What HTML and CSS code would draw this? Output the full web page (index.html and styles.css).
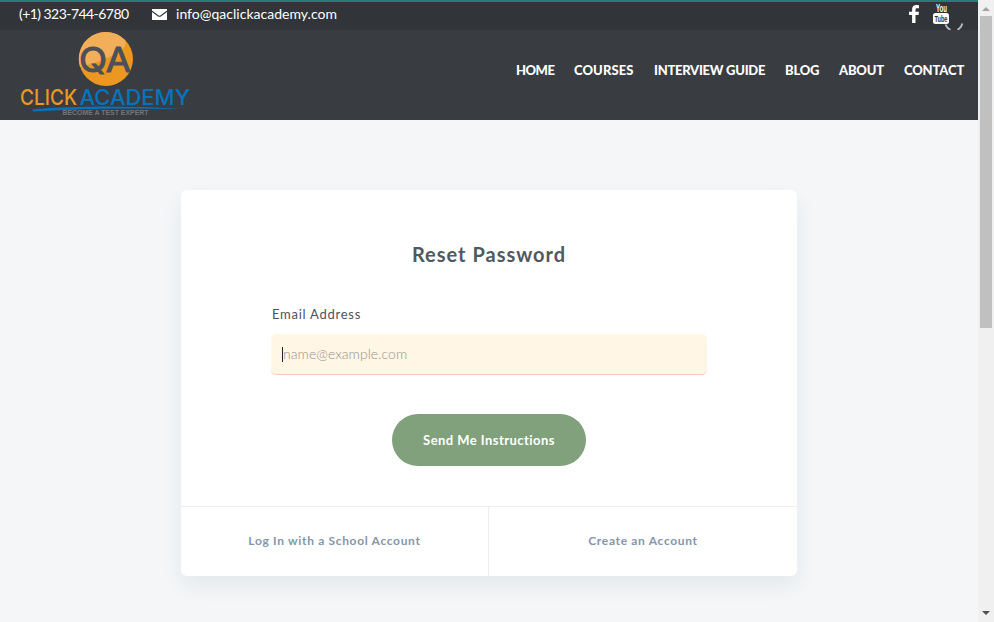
FILE: index.html
```html
<!DOCTYPE html>
<html lang="en">
<head>
<meta charset="utf-8">
<title>Reset Password</title>
<link rel="stylesheet" href="styles.css">
</head>
<body>
<div class="page">
  <div class="topbar">
    <span class="phone">(+1) 323-744-6780</span>
    <svg class="mail" width="15" height="11" viewBox="0 0 15 11"><rect width="15" height="11" fill="#fff"/><path d="M0 2.3 6 6.700q1.500 1 3 0l6-4.400" fill="none" stroke="#313439" stroke-width="1.100"/></svg>
    <span class="email">info@qaclickacademy.com</span>
    <div class="social">
      <svg width="10" height="18" viewBox="0 0 10 18"><path d="M10 .2v3H8.200c-1.400 0-1.700.7-1.700 1.600v2H10l-.5 3.300h-3V18H3.100v-7.900H0V6.800h3.100V4.300C3.100 1.500 4.800 0 7.400 0z" fill="#fff"/></svg>
      <svg class="youtube" width="32" height="28" viewBox="0 0 32 28"><text x="3" y="10" textLength="11" lengthAdjust="spacingAndGlyphs" class="you">You</text><rect y="11" width="16" height="11" rx="2.500" fill="#fff"/><text x="1.500" y="20" textLength="13" lengthAdjust="spacingAndGlyphs" class="tube">Tube</text><path d="M12.500 22.500a9 9 0 0 0 5 5.300M24.500 27.800q4-2 4.800-6.300" fill="none" stroke="#b5b6b9" stroke-width="2"/></svg>
    </div>
  </div>
  <header class="header">
    <svg class="logo" width="174" height="90" viewBox="0 0 174 90" role="img" aria-label="QA Click Academy">
      <circle cx="88" cy="29" r="27" fill="#ed9723"/>
      <path d="M62 37A27 27 0 0 1 107 10Q110 17 99 23 83 32 62 37Z" fill="#f2ae58"/>
      <text x="61" y="42" textLength="52" lengthAdjust="spacingAndGlyphs" class="logo-qa">QA</text>
      <text x="2" y="74.500" textLength="57" lengthAdjust="spacingAndGlyphs" class="logo-word click">CLICK</text>
      <text x="61.500" y="74.500" textLength="110.500" lengthAdjust="spacingAndGlyphs" class="logo-word academy">ACADEMY</text>
      <path d="M14 79.500Q80 74 162 79 85 77 15 81.500Z" fill="#0873bd"/>
      <text x="44.500" y="85" textLength="86" lengthAdjust="spacingAndGlyphs" class="logo-tag">BECOME A TEST EXPERT</text>
    </svg>
    <nav class="nav">
      <a class="n1">HOME</a><a class="n2">COURSES</a><a class="n3">INTERVIEW GUIDE</a><a class="n4">BLOG</a><a class="n5">ABOUT</a><a class="n6">CONTACT</a>
    </nav>
  </header>
  <main class="card">
    <form class="form">
      <h1>Reset Password</h1>
      <label>Email Address</label>
      <div class="field"><span class="caret"></span><span class="placeholder">name@example.com</span></div>
      <button type="button"><span>Send Me Instructions</span></button>
    </form>
    <div class="links">
      <a><span class="login">Log In with a School Account</span></a>
      <a><span class="create">Create an Account</span></a>
    </div>
  </main>
</div>
<div class="scrollbar">
  <svg width="16" height="16" viewBox="0 0 16 16"><path d="M4 11h8L8 7z" fill="#a3a3a3"/></svg>
  <div class="thumb"></div>
  <svg class="down" width="16" height="16" viewBox="0 0 16 16"><path d="M4 5h8L8 9z" fill="#505050"/></svg>
</div>
</body>
</html>
```

FILE: styles.css
```css
* { box-sizing: border-box; }
body { margin: 0; display: flex; height: 622px; overflow: hidden; background: #f4f6f8; font-family: Lato, "Liberation Sans", sans-serif; }
.page { width: 978px; }
.topbar { height: 30px; border-top: 2px solid #247d75; background: #313439; color: #fff; display: flex; align-items: flex-start; padding-left: 19px; font-size: 14px; line-height: 24px; white-space: nowrap; }
.phone { width: 133px; letter-spacing: -0.55px; }
.mail { margin: 7px 9px 0 0; }
.email { letter-spacing: 0.02px; }
.social { margin-left: auto; display: flex; padding: 3px 13px 0 0; gap: 14px; }
.youtube { margin-top: -3px; }
.you { font: bold 10px "Liberation Sans", sans-serif; fill: #fff; }
.tube { font: bold 9px "Liberation Sans", sans-serif; fill: #313439; }
.header { height: 90px; background: #393c41; display: flex; justify-content: space-between; padding-left: 18px; }
.logo-qa { font: 34px Inter, sans-serif; fill: #4b5059; stroke: #4b5059; stroke-width: 1; }
.logo-word { font: 500 21.5px Inter, sans-serif; }
.click { fill: #ed9723; }
.academy { fill: #0873bd; }
.logo-tag { font: bold 7px "Liberation Sans", sans-serif; fill: #73767a; }
.nav { display: flex; gap: 20px; padding: 30px 14px 0 0; color: #fff; font-size: 13px; line-height: 20px; font-weight: 900; white-space: nowrap; }
.n1 { width: 38px; letter-spacing: -.5px; }
.n2 { width: 60px; letter-spacing: .1px; }
.n3 { width: 111px; letter-spacing: -.27px; }
.n4 { width: 34px; letter-spacing: -.2px; }
.n5 { width: 45px; letter-spacing: -.2px; }
.n6 { width: 60px; letter-spacing: -.15px; }
.card { width: 616px; height: 386px; margin: 70px 0 0 181px; background: #fff; border-radius: 6px; box-shadow: 0 10px 20px rgba(0, 75, 70, .07); display: flex; flex-direction: column; }
.form { height: 316px; padding: 50px 90px 0; display: flex; flex-direction: column; }
h1 { margin: 0; text-align: center; color: #4f5960; font-size: 20px; line-height: 28px; font-weight: 700; letter-spacing: 1px; }
label { margin: 36px 0 0 1px; color: #4a5260; font-size: 13px; line-height: 20px; letter-spacing: .75px; }
.field { margin-top: 10px; height: 41px; width: 436px; background: #fff6e5; border-bottom: 1px solid #fbcdb8; border-radius: 5px; display: flex; align-items: center; padding-left: 11px; }
.caret { width: 1px; height: 15px; background: #222; }
.placeholder { color: #96928a; font-size: 14px; line-height: 20px; font-weight: 300; letter-spacing: .05px; }
button { margin: 39px auto 0; width: 194px; height: 52px; padding: 0 0 1px; border: 0; border-radius: 26px; background: #80a17b; color: #fff; font: 700 13px Lato, sans-serif; letter-spacing: .45px; white-space: nowrap; }
.links { height: 70px; border-top: 1px solid #ebedee; display: grid; grid-template-columns: 1fr 1fr; }
.links a { display: flex; align-items: center; justify-content: center; padding-bottom: 2px; color: #8596a9; font-size: 12px; line-height: 18px; font-weight: 700; letter-spacing: .67px; }
.links a:first-child { border-right: 1px solid #ebedee; }
.scrollbar { width: 16px; height: 622px; background: #f0f0f0; display: flex; flex-direction: column; }
.thumb { width: 12px; height: 312px; margin-left: 2px; background: #c0c0c0; }
.down { margin-top: auto; }
```
